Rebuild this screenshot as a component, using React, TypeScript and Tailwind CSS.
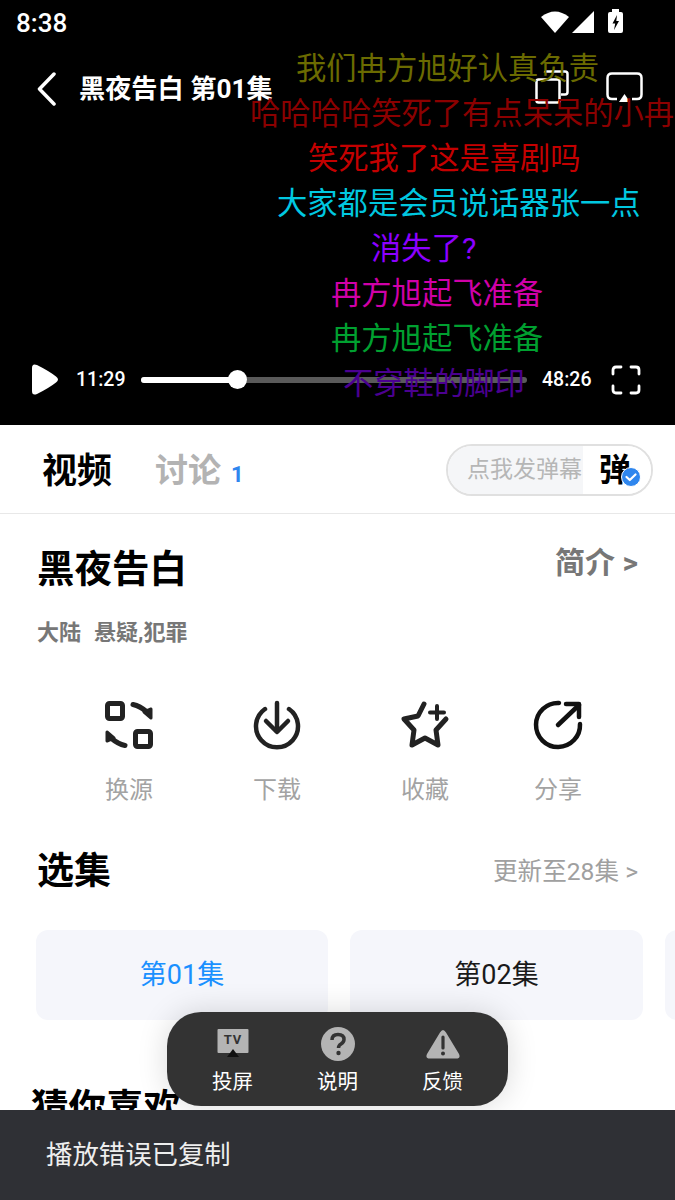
const FONT = "font-['Roboto','Noto_Sans_CJK_SC',sans-serif]";

const DANMAKU = [
  { text: '我们冉方旭好认真负责', cls: 'left-[296px] top-[47px] text-[#6b6b00]' },
  { text: '哈哈哈哈笑死了有点呆呆的小冉', cls: 'left-[250px] top-[92px] text-[#8b0000]' },
  { text: '笑死我了这是喜剧吗', cls: 'left-[308px] top-[137px] text-[#c40000]' },
  { text: '大家都是会员说话器张一点', cls: 'left-[277px] top-[182px] text-[#00c8e0]' },
  { text: '消失了?', cls: 'left-[371px] top-[227px] text-[#8c00ff]' },
  { text: '冉方旭起飞准备', cls: 'left-[331px] top-[272px] text-[#d000a8]' },
  { text: '冉方旭起飞准备', cls: 'left-[331px] top-[317px] text-[#00a030]' },
  { text: '不穿鞋的脚印', cls: 'left-[343px] top-[362px] text-[#4b0090]' },
];

function StatusIcons() {
  return (
    <svg width="84" height="28" viewBox="0 0 84 28" fill="white">
      <path d="M0 8 Q14 -3 28 8 L14 24 Z" />
      <path d="M53 2 V24 H31 Z" />
      <path d="M69 3 Q67 3 67 5 V22 Q67 24 69 24 H80 Q82 24 82 22 V5 Q82 3 80 3 H78 V0 H71 V3 Z" />
      <path d="M76 6 L71.500 14.500 H74.200 L73 21 L78 12 H75.300 Z" fill="black" />
    </svg>
  );
}

function TopIcons() {
  return (
    <div className="mb-[3px] flex items-center gap-[37px]">
      <svg width="34" height="34" viewBox="0 0 34 34" fill="none" stroke="white" strokeWidth="2.500">
        <path d="M10 2.500 Q10 1.500 12 1.500 H30 Q32.500 1.500 32.500 4 V22 Q32.500 24.500 30 24.500 H26" />
        <rect x="1.500" y="9.500" width="23" height="23" rx="2" />
      </svg>
      <svg width="37" height="31" viewBox="0 0 37 31" fill="none" stroke="white" strokeWidth="2.500">
        <path d="M11 27 H6 Q1.500 27 1.500 22.500 V6 Q1.500 1.500 6 1.500 H31 Q35.500 1.500 35.500 6 V22.500 Q35.500 27 31 27 H26" />
        <path d="M18.500 22 L24 30 H13 Z" fill="white" stroke="none" />
      </svg>
    </div>
  );
}

function BackIcon() {
  return (
    <svg width="20" height="34" viewBox="0 0 20 34" fill="none" stroke="white" strokeWidth="3.500" strokeLinecap="round" strokeLinejoin="round">
      <path d="M17 2 L2.500 17 L17 32" />
    </svg>
  );
}

function PlayIcon() {
  return (
    <svg width="28" height="31" viewBox="0 0 28 31" fill="white">
      <path d="M1 4 Q1 -1 6 1 Q18 7 25 12.500 Q29 15.500 25 18.500 Q18 24 6 30 Q1 32 1 27 Z" />
    </svg>
  );
}

function FullscreenIcon() {
  return (
    <svg width="30" height="30" viewBox="0 0 30 30" fill="none" stroke="white" strokeWidth="2.800" strokeLinecap="round">
      <path d="M2 9 V5 Q2 2 5 2 H10" />
      <path d="M20 2 H25 Q28 2 28 5 V9" />
      <path d="M28 21 V25 Q28 28 25 28 H20" />
      <path d="M10 28 H5 Q2 28 2 25 V21" />
    </svg>
  );
}

function SwapIcon() {
  return (
    <svg width="50" height="50" viewBox="0 0 50 50" fill="none" stroke="#222" strokeWidth="5" strokeLinecap="round" strokeLinejoin="round">
      <rect x="3.500" y="3.500" width="15" height="15" rx="2" />
      <rect x="31.500" y="31.500" width="15" height="15" rx="2" />
      <path d="M29 4.500 Q36 6 43 12" />
      <path d="M47 9 V18 L40 12 Z" fill="#222" strokeWidth="3" />
      <path d="M21 45.500 Q14 44 7 38" />
      <path d="M3 41 V32 L10 38 Z" fill="#222" strokeWidth="3" />
    </svg>
  );
}

function DownloadIcon() {
  return (
    <svg width="50" height="50" viewBox="0 0 50 50" fill="none" stroke="#222" strokeWidth="4.500" strokeLinecap="round" strokeLinejoin="round">
      <path d="M13 9 A21 21 0 1 0 37 9" />
      <path d="M25 3 V31" />
      <path d="M14 21 L25 32 L36 21" />
    </svg>
  );
}

function StarIcon() {
  return (
    <svg width="50" height="50" viewBox="0 0 50 50" fill="none" stroke="#222" strokeWidth="5" strokeLinecap="round" strokeLinejoin="round">
      <path d="M24 4 L18 16 L4 19 L14 30 L12 45 L25 38 L38 45 L36 30 L46 19" />
      <path d="M37 6 V19 M30 12.500 H44" strokeWidth="4" />
    </svg>
  );
}

function ShareIcon() {
  return (
    <svg width="50" height="50" viewBox="0 0 50 50" fill="none" stroke="#111" strokeWidth="4.500" strokeLinecap="round" strokeLinejoin="round">
      <path d="M26 3 A22 22 0 1 0 47 24" />
      <path d="M25 25 L46 5" />
      <path d="M33 4 H46 V17" />
    </svg>
  );
}

function TvIcon() {
  return (
    <svg width="32" height="32" viewBox="0 0 32 32">
      <rect x="0.500" y="1" width="31" height="24" rx="1" fill="#b4b4b4" />
      <text x="16" y="16" textAnchor="middle" fontSize="13" fontWeight="700" letterSpacing="1" fontFamily="Roboto, sans-serif" fill="#333">TV</text>
      <path d="M16 21 L22 29 H10 Z" fill="#111" />
    </svg>
  );
}

function HelpIcon() {
  return (
    <svg width="34" height="34" viewBox="0 0 34 34">
      <circle cx="17" cy="17" r="17" fill="#b4b4b4" />
      <path d="M11 13 Q11 7.500 17 7.500 Q23 7.500 23 12.500 Q23 15 20 17 Q17.500 18.500 17.500 21" fill="none" stroke="#333" strokeWidth="3.500" />
      <circle cx="17.500" cy="26" r="2.200" fill="#333" />
    </svg>
  );
}

function WarnIcon() {
  return (
    <svg width="34" height="32" viewBox="0 0 34 32">
      <path d="M17 2 Q18.500 2 20 4.500 L33 26 Q35 30.500 30 30.500 H4 Q-1 30.500 1 26 L14 4.500 Q15.500 2 17 2 Z" fill="#b4b4b4" />
      <path d="M17 9 V20" stroke="#333" strokeWidth="3.200" strokeLinecap="round" />
      <circle cx="17" cy="25.500" r="2" fill="#333" />
    </svg>
  );
}

function ActionItem({ icon, label, className }: { icon: React.ReactNode; label: string; className: string }) {
  return (
    <div className={`flex flex-col items-center ${className}`}>
      {icon}
      <span className="mt-[24px] text-[24px] leading-[32px] text-[#a3a3a3]">{label}</span>
    </div>
  );
}

function FloatItem({ icon, label }: { icon: React.ReactNode; label: string }) {
  return (
    <div className="flex w-[105px] flex-col items-center">
      <div className="flex h-[34px] items-center">{icon}</div>
      <span className="mt-[7px] text-[20.500px] leading-[28px] text-white">{label}</span>
    </div>
  );
}

export default function App() {
  return (
    <div className={`relative h-[1200px] w-[675px] overflow-hidden bg-white ${FONT}`}>
      {/* player */}
      <div className="relative flex h-[425px] flex-col bg-black">
        <div className="flex h-[46px] items-center justify-between pl-[16px] pr-[50px]">
          <span className="text-[26px] font-medium leading-none text-white">8:38</span>
          <StatusIcons />
        </div>
        <div className="flex items-center justify-between pl-[37px] pr-[32px] pt-[24px]">
          <div className="flex items-center gap-[22px]">
            <BackIcon />
            <span className="pt-[1px] text-[26.200px] font-bold leading-[36px] text-white">黑夜告白 第01集</span>
          </div>
          <TopIcons />
        </div>
        <div className="mt-auto flex items-center pb-[30px] pl-[31px] pr-[34px]">
          <PlayIcon />
          <span className="ml-[17px] w-[50px] text-[19.500px] font-medium text-white">11:29</span>
          <div className="relative ml-[15px] h-[6px] w-[386px] rounded-full bg-[#5a5a5a]">
            <div className="h-full w-[96px] rounded-full bg-white" />
            <div className="absolute left-[87px] top-[-6.500px] h-[19px] w-[19px] rounded-full bg-white" />
          </div>
          <span className="ml-[15px] w-[50px] text-[19.500px] font-medium text-white">48:26</span>
          <div className="ml-[19px]">
            <FullscreenIcon />
          </div>
        </div>
        {DANMAKU.map((d, i) => (
          <span key={i} className={`absolute whitespace-nowrap text-[30.300px] leading-[44px] ${d.cls}`}>
            {d.text}
          </span>
        ))}
      </div>

      {/* tabs */}
      <div className="flex h-[89px] items-center border-b border-[#e8e8e8] pl-[42px] pr-[22px]">
        <span className="mt-[5px] text-[35px] font-bold leading-none text-black">视频</span>
        <span className="ml-[43px] mt-[3px] text-[33px] font-bold leading-none text-[#b3b3b3]">讨论</span>
        <span className="ml-[10px] mt-[12px] text-[22px] font-bold leading-none text-[#2f86ee]">1</span>
        <div className="ml-auto mt-[1px] flex h-[52px] w-[207px] overflow-hidden rounded-full border-2 border-[#e0e0e0]">
          <div className="flex w-[135px] items-center bg-[#f5f6f8] pl-[19px]">
            <span className="whitespace-nowrap text-[23px] leading-none text-[#b6b6b6]">点我发弹幕</span>
          </div>
          <div className="relative flex flex-1 items-center bg-white pl-[16px]">
            <span className="text-[32px] font-bold leading-none text-black">弹</span>
            <svg className="absolute left-[38px] top-[21px]" width="20" height="20" viewBox="0 0 20 20">
              <circle cx="10" cy="10" r="9.500" fill="#2f86ee" stroke="white" strokeWidth="1" />
              <path d="M5.500 10 L8.800 13 L14.500 7.500" fill="none" stroke="white" strokeWidth="2.200" strokeLinecap="round" strokeLinejoin="round" />
            </svg>
          </div>
        </div>
      </div>

      {/* info */}
      <div className="pl-[37px] pr-[37px] pt-[31px]">
        <div className="flex items-start justify-between">
          <span className="text-[37.500px] font-bold leading-[48px] text-black">黑夜告白</span>
          <span className="-mt-[2px] text-[30px] font-bold leading-[40px] text-[#777]">简介 &gt;</span>
        </div>
        <div className="mt-[25px] flex gap-[13px] text-[22px] font-bold leading-[30px] text-[#777]">
          <span>大陆</span>
          <span>悬疑,犯罪</span>
        </div>
      </div>

      {/* actions */}
      <div className="mt-[52px] flex items-start">
        <ActionItem icon={<SwapIcon />} label="换源" className="ml-[104px]" />
        <ActionItem icon={<DownloadIcon />} label="下载" className="ml-[98px]" />
        <ActionItem icon={<StarIcon />} label="收藏" className="ml-[98px]" />
        <ActionItem icon={<ShareIcon />} label="分享" className="ml-[83px]" />
      </div>

      {/* episodes */}
      <div className="mt-[42px] flex items-center justify-between pl-[37px] pr-[37px]">
        <span className="text-[37px] font-bold leading-[48px] text-black">选集</span>
        <span className="text-[24.600px] leading-[32px] text-[#a0a0a0]">更新至28集 &gt;</span>
      </div>
      <div className="mt-[34px] flex gap-[22px] pl-[36px]">
        <div className="flex h-[90px] w-[292px] shrink-0 items-center justify-center rounded-[12px] bg-[#f5f6fb] text-[27px] text-[#1a90ff]">第01集</div>
        <div className="flex h-[90px] w-[293px] shrink-0 items-center justify-center rounded-[12px] bg-[#f5f6fb] text-[27px] text-[#1a1a1a]">第02集</div>
        <div className="h-[90px] w-[293px] shrink-0 rounded-[12px] bg-[#f5f6fb]" />
      </div>
      <div className="mt-[64px] pl-[31px] text-[37.500px] font-bold leading-[48px] text-black">猜你喜欢</div>

      {/* floating menu */}
      <div className="absolute left-[167px] top-[1012px] flex h-[94px] w-[341px] items-start justify-center rounded-[34px] bg-[#333333] pt-[15px] shadow-[0_0_30px_rgba(0,0,0,0.15)]">
        <FloatItem icon={<TvIcon />} label="投屏" />
        <FloatItem icon={<HelpIcon />} label="说明" />
        <FloatItem icon={<WarnIcon />} label="反馈" />
      </div>

      {/* toast */}
      <div className="absolute bottom-0 left-0 flex h-[90px] w-full items-center bg-[#2f3035] pl-[46px]">
        <span className="text-[26.400px] leading-none text-[#eeeeee]">播放错误已复制</span>
      </div>
    </div>
  );
}
